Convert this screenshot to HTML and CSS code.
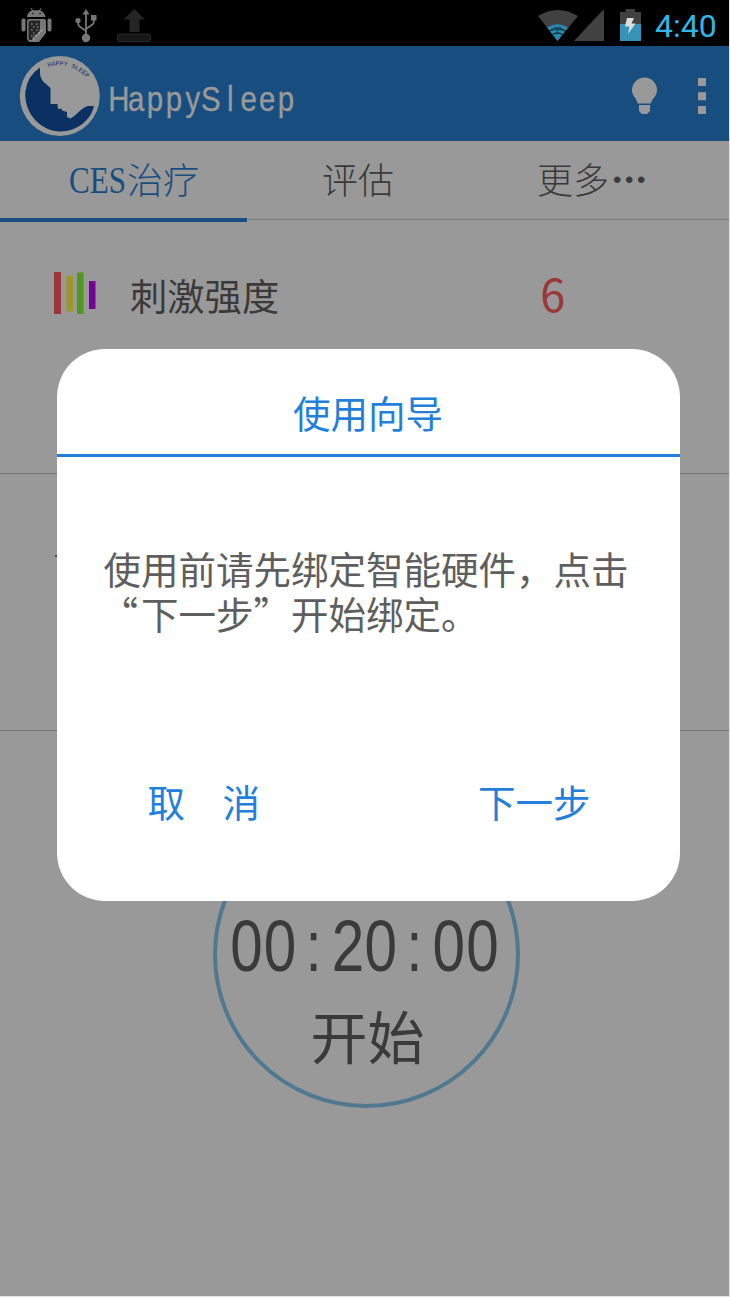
FILE: index.html
```
<!DOCTYPE html>
<html lang="zh-CN">
<head>
<meta charset="utf-8">
<title>HappySleep</title>
<link rel="stylesheet" href="styles.css">
</head>
<body>
<div class="screen">
  <div class="status">
    <svg class="status-icons" width="160" height="46" viewBox="0 0 160 46">
      <g fill="#777">
        <path d="M27 17C27.500 13 30 11.200 32 10.500L30.500 8.500L31.300 8L33 10.200H39L41 8L41.800 8.500L40.200 10.500C43 11.500 45 13.500 45.500 17Z"/>
        <rect x="21.500" y="18.500" width="4" height="13" rx="1.800"/>
        <rect x="47.500" y="18.500" width="4" height="13" rx="1.800"/>
        <path d="M29 19H44Q46 19 46 21V33L39 42H30Q27 41 27 38V21Q27 19 29 19Z"/>
      </g>
      <path d="M30 20.500H40V31L33 40H30Q28.500 40 28.500 38V22Z" fill="#252525"/>
      <path d="M31 24h1.600m3.400 0h1.600M33 27h1.600m2.400 0h1.600M31 30h1.600m3.400 0h1.600M33 33h1.600M31 36h1.600" stroke="#777" stroke-width="1.600"/>
      <path d="M33 40l2-4 3-1 2-4 4-1" fill="none" stroke="#999" stroke-width="2" stroke-dasharray="3 1"/>
      <circle cx="33" cy="13.500" r=".8" fill="#111"/><circle cx="40" cy="13.500" r=".8" fill="#111"/>
      <g fill="none" stroke="#777" stroke-width="1.800"><path d="M86 12V36M86 31L79 26Q78 25 78 21M86 29L93 24Q94 23 94 19"/></g>
      <g fill="#777"><path d="M82.500 14.500L86 9L89.500 14.500Z"/><circle cx="86" cy="38" r="4.200"/><circle cx="78" cy="20.500" r="2.600"/><rect x="91" y="15" width="5.500" height="5.500"/></g>
      <path d="M123.500 19.500L134.500 9L145 19.500H139.500V32H129.500V19.500Z" fill="#252525"/>
      <rect x="117.500" y="34" width="33" height="7.500" rx="1.500" fill="#171717" stroke="#292929"/>
    </svg>
    <div class="status-right">
      <svg width="110" height="46" viewBox="535 0 110 46">
        <path d="M538 16Q557.500 4 578 16L557.500 41Z" fill="#414141"/>
        <path d="M547 27.500Q557.500 21 568 27.500L557.500 41Z" fill="#2888ad"/>
        <path d="M549.500 31Q557.500 26.500 565.500 31M552.500 34.500Q557.500 31.500 562.500 34.500" fill="none" stroke="#082a38" stroke-width="1.300"/>
        <path d="M554 27L557.500 32L561.500 27Z" fill="#164c60"/>
        <path d="M574 41L602.500 10.500Q604 9 604 11V41Z" fill="#414141"/>
        <path d="M620 12H625.500V9H635V12H641V24H620Z" fill="#414141"/>
        <rect x="620" y="24" width="21" height="17" fill="#3794b8"/>
        <path d="M627 18H634L631.500 23.500H635.500L628 34L629.500 26.500H625Z" fill="#ddd"/>
      </svg>
      <span class="clock">4:40</span>
    </div>
  </div>

  <div class="appbar">
    <svg class="logo" width="80" height="80" viewBox="20 56 80 80">
      <circle cx="59.800" cy="96" r="40" fill="#999"/>
      <path d="M40 67.500Q27 76 25.300 92C24 111 38 130 59 131.500C77 132 91 120 94 106H88C82 107 77 115 70.500 118.500L67 117L67 112L62 110.500L61.500 108.500L58 109L57.500 104H50.500V88L46.500 84.500Q40 80 40 73Z" fill="#0b3163"/>
      <path id="arc" d="M48 67Q70 60 89 80" fill="none"/>
      <text class="logo-text"><textPath href="#arc" textLength="43">HAPPY SLEEP</textPath></text>
    </svg>
    <svg class="brand" width="200" height="50" viewBox="0 0 200 50">
      <text transform="scale(.84 1)" y="40" x="-.8 22.500 45 67.500 91 109.500 140.500 156.500 178.500 201">HappySleep</text>
    </svg>
    <svg class="actions" width="90" height="50" viewBox="630 71 90 50">
      <path d="M637.500 103.500C637 98 632 96.500 632 90A12.500 12.500 0 0 1 657 90C657 96.500 652 98 651 103.500ZM639 105H650V111L647 114H642L639 111Z" fill="#999"/>
      <path d="M698 78h8v8h-8zM698 92.300h8v8h-8zM698 106h8v8h-8z" fill="#999"/>
    </svg>
  </div>

  <div class="tabs">
    <div class="tab active"><span class="ces">CES</span>治疗</div>
    <div class="tab">评估</div>
    <div class="tab more">更多<span class="dots">•••</span></div>
  </div>

  <div class="row strength">
    <svg width="44" height="44" viewBox="53 271 44 44">
      <rect x="54" y="272" width="7" height="42" fill="#9b3737"/>
      <rect x="66.500" y="275.500" width="6.500" height="36" fill="#9b9826"/>
      <rect x="77" y="272.500" width="6.500" height="41.500" fill="#4f981e"/>
      <rect x="89" y="281" width="6.500" height="28" fill="#760098"/>
    </svg>
    <span class="label">刺激强度</span>
    <span class="value">6</span>
  </div>
  <div class="row second"><i class="tick"></i></div>
  <div class="timer-area">
    <div class="timer">
      <svg class="digits" width="280" height="90" viewBox="0 0 280 90">
        <text transform="scale(.8 1)" y="69" x="4 46 98 131 172 224 257 299">00:20:00</text>
      </svg>
      <div class="start">开始</div>
    </div>
  </div>

  <div class="dialog">
    <div class="dialog-title">使用向导</div>
    <div class="dialog-body">
      <div>使用前请先绑定智能硬件，点击</div>
      <div class="line2"><span class="open">“</span><span>下一步</span><span class="close">”</span><span>开始绑定。</span></div>
    </div>
    <div class="dialog-actions"><span>取　消</span><span>下一步</span></div>
  </div>
</div>
</body>
</html>
```
FILE: styles.css
```
* { box-sizing: border-box; }
body { margin: 0; background: #e2e2e2; overflow: hidden; }
svg { display: block; flex: none; overflow: visible; }
.screen {
  position: relative;
  width: 729px;
  height: 1296px;
  background: #999;
  color: #3a3a3a;
  overflow: hidden;
  font-family: "Liberation Sans", "Noto Sans CJK SC", sans-serif;
}
.status { height: 46px; background: #000; display: flex; justify-content: space-between; }
.status-right { display: flex; width: 194px; }
.clock { font: 32px/52px Roboto, sans-serif; color: #33b5e5; margin-left: 10px; }
.appbar {
  height: 95px;
  background: #184d80;
  display: flex;
  align-items: center;
  padding: 5px 9px 0 20px;
}
.logo-text { font: 6.500px "Liberation Mono", monospace; fill: #0b3163; }
.brand { margin-left: 9px; }
.brand text { font: 35px "Liberation Sans", sans-serif; fill: #999; stroke: #999; stroke-width: .4px; }
.actions { margin-left: auto; }
.tabs { height: 79px; border-bottom: 1px solid #7b7b7b; display: flex; }
.tab {
  width: 247px;
  height: 81px;
  padding-left: 21px;
  display: flex;
  justify-content: center;
  font: 300 36px/75px "Noto Sans CJK SC", sans-serif;
}
.tab:nth-child(2) { width: 222px; padding-left: 0; }
.tab.more { width: 260px; padding: 0 15px 0 0; }
.tab.active { color: #184d80; border-bottom: 4px solid #184d80; }
.ces { font-family: "Liberation Serif", serif; font-size: 37px; line-height: 79px; width: 58px; transform: scaleX(.84); transform-origin: left; }
.dots { font: 24px/78px "Liberation Sans", sans-serif; letter-spacing: 3.600px; margin: 0 -3px 0 4px; }
.row { border-bottom: 1px solid #737373; }
.strength { height: 254px; display: flex; align-items: flex-start; padding: 51px 0 0 53px; }
.label { font: 37.300px/48px "Noto Sans CJK SC", sans-serif; margin-left: 33px; }
.value { font: 45px/64px "Noto Sans CJK SC", sans-serif; color: #9b3737; margin: -10px 0 0 261px; }
.second { height: 257px; padding: 81px 0 0 55px; }
.tick { display: block; width: 6px; height: 2px; background: #184d80; }
.timer-area { height: 565px; padding: 70px 0 0 213px; }
.timer {
  width: 307px;
  height: 307px;
  border: 4.500px solid #507990;
  border-radius: 50%;
  display: flex;
  flex-direction: column;
  align-items: center;
  padding-top: 97px;
}
.digits text { font: 73px "Liberation Sans", sans-serif; fill: #3a3a3a; }
.start { font: 57px/70px "Noto Sans CJK SC", sans-serif; margin-top: 7px; padding-left: 2px; }
.dialog {
  position: absolute;
  left: 56.500px;
  top: 349px;
  width: 623px;
  height: 552px;
  border-radius: 48px;
  background: #fff;
  font: 37.500px/45px "Noto Sans CJK SC", sans-serif;
}
.dialog-title { height: 108px; padding-top: 40px; border-bottom: 3px solid #237fd9; text-align: center; color: #237fd9; }
.dialog-body { padding: 88px 0 0 47px; color: #5e5e5e; white-space: nowrap; }
.line2 { display: flex; }
.open, .close { width: 37.500px; }
.open { width: 40.500px; margin-left: -3px; }
.dialog-actions { display: flex; justify-content: space-between; padding: 143px 89px 0 91px; color: #237fd9; }
```
